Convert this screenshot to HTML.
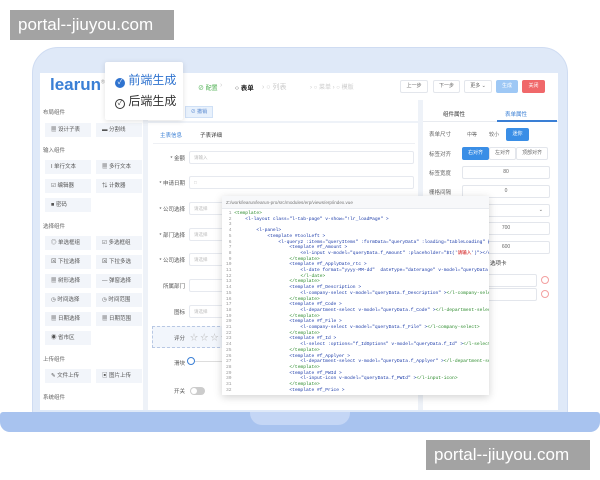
<!DOCTYPE html>
<html><head><meta charset="utf-8"><style>
*{margin:0;padding:0;box-sizing:border-box}
body{width:600px;height:480px;background:#fff;position:relative;overflow:hidden;font-family:"Liberation Sans","Noto Sans CJK SC",sans-serif;color:#555}
.a{position:absolute}
.t{position:absolute;font-size:5.5px;color:#666;white-space:nowrap}
.wm{position:absolute;background:#a3a3a3;color:#fff;font-size:17px;line-height:30px;padding-left:8px;width:164px;height:30px}
.it{position:absolute;width:46px;height:14px;background:#f2f5fa;font-size:5.5px;line-height:14px;padding-left:6px;color:#555;white-space:nowrap}
.sec{position:absolute;font-size:5.5px;color:#666;left:43px}
.lbl{position:absolute;font-size:5.5px;color:#555;text-align:right;width:42px;left:143px}
.inp{position:absolute;left:189px;width:225px;height:13px;border:1px solid #e6e9ef;border-radius:2px;font-size:4.5px;color:#bbb;line-height:11px;padding-left:4px;background:#fff}
.btn{position:absolute;height:13px;border:1px solid #e3e6ec;background:#fff;font-size:5px;line-height:11px;text-align:center;color:#666;border-radius:2px}
.code{font-family:"Liberation Mono",monospace;font-size:4.6px;line-height:5.7px;white-space:pre;color:#1a3aa8}
.g{color:#2a8a2a}.n{color:#999}.r{color:#c00}
</style></head><body>
<div class="wm" style="left:10px;top:10px">portal--jiuyou.com</div>
<!-- laptop frame -->
<div class="a" style="left:32px;top:47px;width:536px;height:372px;background:#dfe9f8;border-radius:26px 26px 8px 8px;border:1px solid #cfdcf2"></div>
<div class="a" style="left:0;top:412px;width:600px;height:20px;background:#a8c3ef;border-radius:3px 3px 10px 10px"></div>
<div class="a" style="left:250px;top:412px;width:100px;height:13px;background:#c4d6f5;border-radius:0 0 12px 12px"></div>
<!-- app bg -->
<div class="a" style="left:40px;top:73px;width:518px;height:337px;background:#eef2f8"></div>
<!-- header -->
<div class="a" style="left:40px;top:73px;width:518px;height:27px;background:#fff"></div>
<div class="a" style="left:50px;top:75px;font-size:17px;font-weight:bold;color:#3a7fd5">learun<sup style="font-size:5px;color:#999;font-weight:normal">®</sup></div>
<div class="t" style="left:198px;top:83px;color:#4caf50;font-size:6px">⊘ 配置</div>
<div class="t" style="left:220px;top:82px;color:#ccc;font-size:7px">›</div>
<div class="t" style="left:235px;top:82px;color:#222;font-size:6.5px;font-weight:bold">○ 表单</div>
<div class="t" style="left:262px;top:82px;color:#ccc;font-size:7px">› ○ 列表 </div>
<div class="t" style="left:310px;top:82px;color:#ccc;font-size:6px">› ○ 菜单 › ○ 模版</div>
<div class="btn" style="left:400px;top:80px;width:28px">上一步</div>
<div class="btn" style="left:433px;top:80px;width:27px">下一步</div>
<div class="btn" style="left:464px;top:80px;width:28px">更多 ⌄</div>
<div class="btn" style="left:496px;top:80px;width:22px;background:#9ec8f5;border-color:#9ec8f5;color:#fff">生成</div>
<div class="btn" style="left:522px;top:80px;width:23px;background:#f0686a;border-color:#f0686a;color:#fff">关闭</div>
<!-- sidebar -->
<div class="a" style="left:40px;top:100px;width:103px;height:310px;background:#fff"></div>
<div class="sec" style="top:108px">布局组件</div>
<div class="it" style="left:45px;top:123px">▦ 设计子表</div><div class="it" style="left:96px;top:123px">▬ 分割线</div>
<div class="sec" style="top:146px">输入组件</div>
<div class="it" style="left:45px;top:160px">I 单行文本</div><div class="it" style="left:96px;top:160px">▦ 多行文本</div>
<div class="it" style="left:45px;top:179px">☑ 编辑器</div><div class="it" style="left:96px;top:179px">⇅ 计数器</div>
<div class="it" style="left:45px;top:198px">■ 密码</div>
<div class="sec" style="top:222px">选择组件</div>
<div class="it" style="left:45px;top:236px">◎ 单选框组</div><div class="it" style="left:96px;top:236px">☑ 多选框组</div>
<div class="it" style="left:45px;top:255px">⊠ 下拉选择</div><div class="it" style="left:96px;top:255px">⊠ 下拉多选</div>
<div class="it" style="left:45px;top:274px">▦ 树形选择</div><div class="it" style="left:96px;top:274px">— 弹窗选择</div>
<div class="it" style="left:45px;top:293px">◷ 时间选择</div><div class="it" style="left:96px;top:293px">◷ 时间范围</div>
<div class="it" style="left:45px;top:312px">▦ 日期选择</div><div class="it" style="left:96px;top:312px">▦ 日期范围</div>
<div class="it" style="left:45px;top:331px">◉ 省市区</div>
<div class="sec" style="top:355px">上传组件</div>
<div class="it" style="left:45px;top:369px">✎ 文件上传</div><div class="it" style="left:96px;top:369px">▣ 图片上传</div>
<div class="sec" style="top:393px">系统组件</div>
<!-- center -->
<div class="a" style="left:148px;top:100px;width:270px;height:21px;background:#fff"></div>
<div class="a" style="left:185px;top:106px;width:28px;height:12px;background:#e8f1fc;border:1px solid #cfe0f6;font-size:5px;color:#5a8ad0;line-height:10px;text-align:center">⊘ 撤销</div>
<div class="a" style="left:148px;top:123px;width:270px;height:287px;background:#fff"></div>
<div class="t" style="left:160px;top:131px;color:#3a7fd5">主表信息</div>
<div class="t" style="left:200px;top:131px;color:#333">子表详细</div>
<div class="a" style="left:153px;top:143px;width:262px;height:1px;background:#eef0f4"></div>
<div class="lbl" style="top:154px">* 金额</div><div class="inp" style="top:151px">请输入</div>
<div class="lbl" style="top:179px">* 申请日期</div><div class="inp" style="top:176px">□</div>
<div class="lbl" style="top:205px">* 公司选择</div><div class="inp" style="top:202px">请选择</div>
<div class="lbl" style="top:231px">* 部门选择</div><div class="inp" style="top:228px">请选择</div>
<div class="lbl" style="top:256px">* 公司选择</div><div class="inp" style="top:253px">请选择</div>
<div class="lbl" style="top:282px">所属部门</div><div class="inp" style="top:279px"></div>
<div class="lbl" style="top:308px">图标</div><div class="inp" style="top:305px">请选择</div>
<div class="a" style="left:152px;top:326px;width:263px;height:22px;border:1px dashed #b8c8e4;background:#f2f6fc"></div>
<div class="lbl" style="top:334px">评分</div>
<div class="t" style="left:190px;top:332px;color:#bbb;font-size:8px">☆ ☆ ☆ ☆</div>
<div class="lbl" style="top:359px">滑块</div>
<div class="a" style="left:187px;top:357px;width:8px;height:8px;border:1px solid #3a7fd5;border-radius:50%;background:#fff"></div>
<div class="a" style="left:195px;top:361px;width:30px;height:1px;background:#ddd"></div>
<div class="lbl" style="top:387px">开关</div>
<div class="a" style="left:190px;top:387px;width:15px;height:8px;background:#ccc;border-radius:4px"></div>
<div class="a" style="left:191px;top:388px;width:6px;height:6px;background:#fff;border-radius:50%"></div>
<!-- right panel -->
<div class="a" style="left:423px;top:100px;width:135px;height:310px;background:#fff"></div>
<div class="t" style="left:443px;top:110px;color:#333">组件属性</div>
<div class="t" style="left:505px;top:110px;color:#3a7fd5">表单属性</div>
<div class="a" style="left:423px;top:121px;width:135px;height:1px;background:#e8ebf0"></div>
<div class="a" style="left:497px;top:120px;width:60px;height:1.5px;background:#3a7fd5"></div>
<div class="t" style="left:429px;top:130px">表单尺寸</div>
<div class="t" style="left:467px;top:131px;font-size:5px">中等</div><div class="t" style="left:489px;top:131px;font-size:5px">较小</div>
<div class="btn" style="left:506px;top:128px;width:23px;background:#3a8ee6;border-color:#3a8ee6;color:#fff">迷你</div>
<div class="t" style="left:429px;top:150px">标签对齐</div>
<div class="btn" style="left:462px;top:147px;width:27px;background:#3a8ee6;border-color:#3a8ee6;color:#fff">右对齐</div>
<div class="btn" style="left:489px;top:147px;width:27px">左对齐</div>
<div class="btn" style="left:516px;top:147px;width:32px">顶部对齐</div>
<div class="t" style="left:429px;top:169px">标签宽度</div>
<div class="btn" style="left:462px;top:166px;width:88px">80</div>
<div class="t" style="left:429px;top:188px">栅格间隔</div>
<div class="btn" style="left:462px;top:185px;width:88px">0</div>
<div class="btn" style="left:462px;top:204px;width:88px;text-align:right;padding-right:6px">⌄</div>
<div class="btn" style="left:462px;top:222px;width:88px">700</div>
<div class="btn" style="left:462px;top:241px;width:88px">600</div>
<div class="t" style="left:490px;top:259px;color:#333">选项卡</div>
<div class="btn" style="left:462px;top:274px;width:75px"></div>
<div class="btn" style="left:462px;top:288px;width:75px"></div>
<div class="a" style="left:541px;top:276px;width:8px;height:8px;border:1px solid #f3a0a0;border-radius:50%"></div>
<div class="a" style="left:541px;top:290px;width:8px;height:8px;border:1px solid #f3a0a0;border-radius:50%"></div>
<!-- code overlay -->
<div class="a" style="left:222px;top:196px;width:267px;height:199px;background:#fff;box-shadow:0 2px 8px rgba(0,0,0,.18);overflow:hidden">
<div style="height:13px;background:#f7f8fa;border-bottom:1px solid #e8ebf0;font-size:4.6px;color:#777;line-height:13px;padding-left:4px;white-space:nowrap">Z:/work/learun/learun-pro/src/modules/erp/views/erp/index.vue</div>
<div class="code" style="padding:2px 0 0 4px"><span class="n"> 1</span> <span class="g">&lt;template&gt;</span>
<span class="n"> 2</span>     &lt;l-layout class="l-tab-page" v-show="!lr_loadPage" &gt;
<span class="n"> 3</span>
<span class="n"> 4</span>         &lt;l-panel&gt;
<span class="n"> 5</span>             &lt;template #toolLeft &gt;
<span class="n"> 6</span>                 &lt;l-query2 :items="queryItems" :formData="queryData" :loading="tableLoading" @search="
<span class="n"> 7</span>                     &lt;template #f_Amount &gt;
<span class="n"> 8</span>                         &lt;el-input v-model="queryData.f_Amount" :placeholder="$t('<span class="r">请输入</span>')"&gt;&lt;/el-input
<span class="n"> 9</span>                     <span class="g">&lt;/template&gt;</span>
<span class="n">10</span>                     &lt;template #f_ApplyDate_rtc &gt;
<span class="n">11</span>                         &lt;l-date format="yyyy-MM-dd"  dateType="daterange" v-model="queryData.f_ApplyD
<span class="n">12</span>                         <span class="g">&lt;/l-date&gt;</span>
<span class="n">13</span>                     <span class="g">&lt;/template&gt;</span>
<span class="n">14</span>                     &lt;template #f_Description &gt;
<span class="n">15</span>                         &lt;l-company-select v-model="queryData.f_Description" &gt;<span class="g">&lt;/l-company-select&gt;</span>
<span class="n">16</span>                     <span class="g">&lt;/template&gt;</span>
<span class="n">17</span>                     &lt;template #f_Code &gt;
<span class="n">18</span>                         &lt;l-department-select v-model="queryData.f_Code" &gt;<span class="g">&lt;/l-department-select&gt;</span>
<span class="n">19</span>                     <span class="g">&lt;/template&gt;</span>
<span class="n">20</span>                     &lt;template #f_File &gt;
<span class="n">21</span>                         &lt;l-company-select v-model="queryData.f_File" &gt;<span class="g">&lt;/l-company-select&gt;</span>
<span class="n">22</span>                     <span class="g">&lt;/template&gt;</span>
<span class="n">23</span>                     &lt;template #f_Id &gt;
<span class="n">24</span>                         &lt;l-select :options="f_IdOptions" v-model="queryData.f_Id" &gt;<span class="g">&lt;/l-select&gt;</span>
<span class="n">25</span>                     <span class="g">&lt;/template&gt;</span>
<span class="n">26</span>                     &lt;template #f_Applyer &gt;
<span class="n">27</span>                         &lt;l-department-select v-model="queryData.f_Applyer" &gt;<span class="g">&lt;/l-department-select&gt;</span>
<span class="n">28</span>                     <span class="g">&lt;/template&gt;</span>
<span class="n">29</span>                     &lt;template #f_PWId &gt;
<span class="n">30</span>                         &lt;l-input-icon v-model="queryData.f_PWId" &gt;<span class="g">&lt;/l-input-icon&gt;</span>
<span class="n">31</span>                     <span class="g">&lt;/template&gt;</span>
<span class="n">32</span>                     &lt;template #f_Price &gt;</div>
</div>
<!-- popup (on top) -->
<div class="a" style="left:105px;top:62px;width:78px;height:58px;background:#fff;box-shadow:0 1px 6px rgba(0,0,0,.12);border-radius:2px"></div>
<div class="a" style="left:115px;top:73px;font-size:12px;line-height:14px;color:#2f73cf;white-space:nowrap"><span style="display:inline-block;width:10px;height:10px;border-radius:50%;background:#2f73cf;color:#fff;font-size:7px;line-height:10px;text-align:center;vertical-align:0">✓</span> 前端生成</div>
<div class="a" style="left:115px;top:94px;font-size:12px;line-height:14px;color:#333;white-space:nowrap"><span style="display:inline-block;width:10px;height:10px;border-radius:50%;border:1px solid #333;font-size:7px;line-height:8px;text-align:center;vertical-align:0">✓</span> 后端生成</div>
<div class="wm" style="left:426px;top:440px">portal--jiuyou.com</div>
</body></html>
